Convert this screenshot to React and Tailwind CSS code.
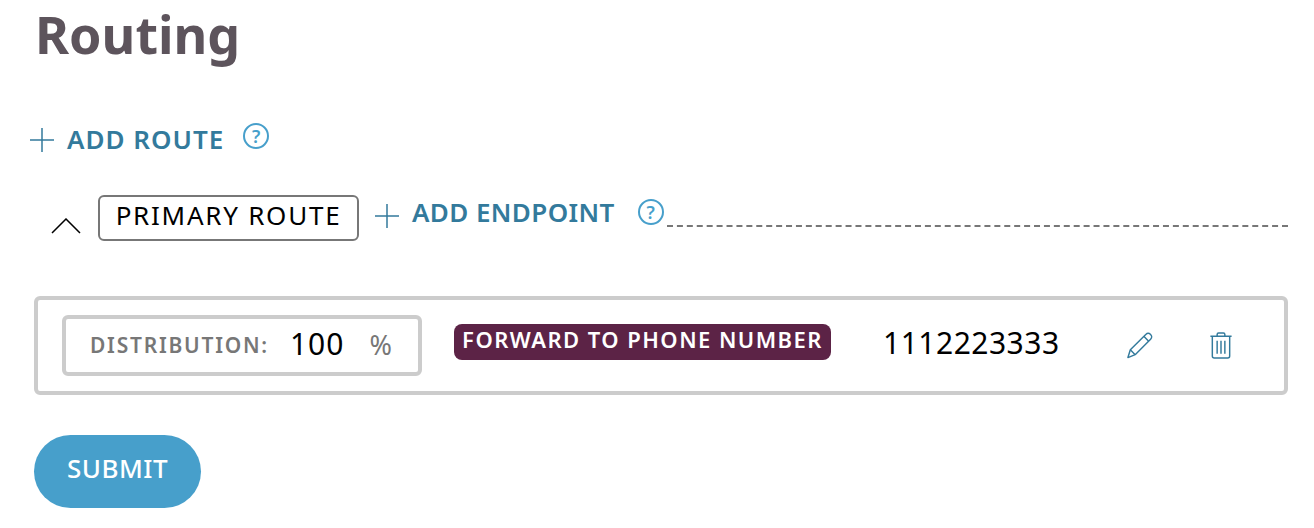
function Plus() {
  return (
    <svg width="24" height="24" viewBox="0 0 24 24" className="shrink-0" fill="none" stroke="#337a9c" strokeWidth="1.5">
      <path d="M0 12H24M12 0V24" />
    </svg>
  );
}

function Help() {
  return (
    <span className="flex h-[26px] w-[26px] shrink-0 items-center justify-center rounded-full border-2 border-[#479fcb] text-[18px] leading-none font-semibold text-[#479fcb]">?</span>
  );
}

function Pencil() {
  return (
    <svg width="27" height="27" viewBox="0 0 28 28" fill="none" stroke="#337a9c" strokeWidth="1.5" strokeLinejoin="round">
      <path d="M2 26.5 4.5 18.5 20.5 2.5C22 1 24 1 25.5 2.5 27 4 27 6 25.5 7.5L9.5 23.5Z" />
      <path d="M4.5 18.5 9.5 23.5M18.5 4.5 23.5 9.5" />
    </svg>
  );
}

function Trash() {
  return (
    <svg width="22" height="27" viewBox="0 0 22 28" fill="none" stroke="#337a9c" strokeWidth="1.5" strokeLinejoin="round">
      <path d="M0 4.5H22M7 4.5V2.5Q7 1 8.5 1H13.5Q15 1 15 2.5V4.5" />
      <path d="M2 4.5V25Q2 27 4 27H18Q20 27 20 25V4.5" />
      <path d="M7 9V22.5M11 9V22.5M15 9V22.5" />
    </svg>
  );
}

export default function App() {
  return (
    <div className="min-h-[528px] bg-white pl-[34px] pr-[26px] font-['Noto_Sans',sans-serif]">
      <h1 className="h-[72px] pl-[1px] text-[52px] leading-[67px] font-bold text-[#5d545c]">Routing</h1>

      <div className="mt-[48px] flex h-[40px] items-center">
        <span className="-ml-[4px] flex"><Plus /></span>
        <span className="ml-[13px] -mt-[2px] text-[26px] leading-none font-semibold tracking-[1px] text-[#337a9c]">ADD ROUTE</span>
        <span className="ml-[19px] -mt-[8px] flex"><Help /></span>
      </div>

      <div className="mt-[35px] flex h-[46px] items-start">
        <svg width="30" height="16" viewBox="0 0 30 16" fill="none" stroke="#000" strokeWidth="1.5" className="mt-[23px] ml-[17px] shrink-0">
          <path d="M1 15 15 1 29 15" />
        </svg>
        <span className="ml-[17px] flex h-[46px] w-[261px] shrink-0 items-center justify-center rounded-[6px] border-2 border-[#777777] pb-[6px] text-[26px] leading-none tracking-[1.75px] text-black">PRIMARY ROUTE</span>
        <span className="mt-[9px] ml-[16px] flex"><Plus /></span>
        <span className="mt-[2px] ml-[13px] text-[26px] leading-[30px] font-semibold tracking-[0.4px] text-[#337a9c]">ADD ENDPOINT</span>
        <span className="mt-[4px] ml-[23px] flex"><Help /></span>
        <div className="mt-[30px] ml-[3px] h-0 flex-1 border-t-2 border-dashed border-[#777777]"></div>
      </div>

      <div className="mt-[55px] flex h-[99px] items-center rounded-[6px] border-4 border-[#cccccc] pl-[24px]">
        <div className="flex h-[61px] w-[360px] items-center rounded-[6px] border-4 border-[#cccccc] pl-[24px]">
          <span className="text-[21px] leading-none font-semibold tracking-[1.75px] text-[#777777]">DISTRIBUTION:</span>
          <span className="ml-[21px] pb-[4px] text-[30px] leading-none tracking-[1px] text-black">100</span>
          <span className="ml-[25px] pb-[2px] text-[27px] leading-none text-[#777777]">%</span>
        </div>
        <span className="ml-[32px] mb-[7px] flex h-[36px] w-[377px] items-center justify-center rounded-[8px] bg-[#5c2346] pb-[6px] text-[22px] leading-none font-semibold tracking-[1.45px] text-white">FORWARD TO PHONE NUMBER</span>
        <span className="ml-[52px] mb-[5px] w-[243px] text-[30px] leading-none tracking-[0.5px] text-black">1112223333</span>
        <span className="flex"><Pencil /></span>
        <span className="ml-[57px] flex"><Trash /></span>
      </div>

      <button className="mt-[40px] flex h-[73px] w-[167px] items-center justify-center rounded-full bg-[#479fcb] pb-[8px] text-[26px] leading-none font-medium tracking-[0.5px] text-white">SUBMIT</button>
    </div>
  );
}
